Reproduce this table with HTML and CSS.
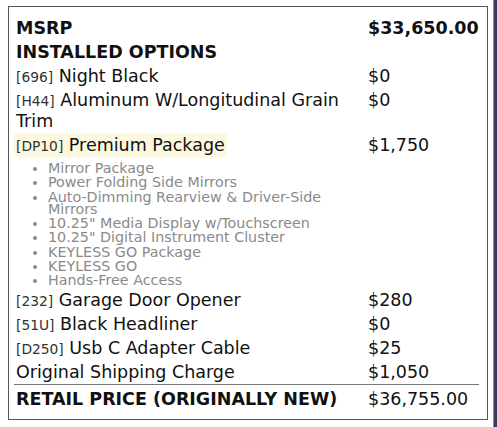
FILE: index.html
```html
<!DOCTYPE html>
<html>
<head>
<meta charset="utf-8">
<link rel="stylesheet" href="styles.css">
</head>
<body>
<div class="edge"></div>
<div class="box">
  <div class="row bold"><div class="label">MSRP</div><div class="value">$33,650.00</div></div>
  <div class="row bold"><div class="label">INSTALLED OPTIONS</div><div class="value"></div></div>
  <div class="row"><div class="label"><span class="code">[696]</span> Night Black</div><div class="value">$0</div></div>
  <div class="row"><div class="label"><span class="code">[H44]</span> Aluminum W/Longitudinal Grain Trim</div><div class="value">$0</div></div>
  <div class="row"><div class="label"><span class="hl"><span class="code">[DP10]</span> Premium Package</span></div><div class="value">$1,750</div></div>
  <div class="row pkg-row"><div class="label">
    <ul class="pkg">
      <li>Mirror Package</li>
      <li>Power Folding Side Mirrors</li>
      <li>Auto-Dimming Rearview &amp; Driver-Side Mirrors</li>
      <li>10.25" Media Display w/Touchscreen</li>
      <li>10.25" Digital Instrument Cluster</li>
      <li>KEYLESS GO Package</li>
      <li>KEYLESS GO</li>
      <li>Hands-Free Access</li>
    </ul>
  </div><div class="value"></div></div>
  <div class="row"><div class="label"><span class="code">[232]</span> Garage Door Opener</div><div class="value">$280</div></div>
  <div class="row"><div class="label"><span class="code">[51U]</span> Black Headliner</div><div class="value">$0</div></div>
  <div class="row"><div class="label"><span class="code">[D250]</span> Usb C Adapter Cable</div><div class="value">$25</div></div>
  <div class="row"><div class="label">Original Shipping Charge</div><div class="value">$1,050</div></div>
  <div class="row total"><div class="label">RETAIL PRICE (ORIGINALLY NEW)</div><div class="value">$36,755.00</div></div>
</div>
</body>
</html>
```

FILE: styles.css
```css
html, body {
  margin: 0;
  padding: 0;
  background: #ffffff;
}
body {
  font-family: "DejaVu Sans", sans-serif;
  color: #111;
  width: 497px;
  height: 427px;
  overflow: hidden;
}
.edge {
  position: fixed;
  top: 0;
  right: 0;
  width: 3px;
  height: 100%;
  background: #3a3a64;
  border-left: 1px solid #8a8aa6;
}
.box {
  box-sizing: border-box;
  margin: 6px 0 0 8px;
  width: 480px;
  height: 414px;
  border: 1px solid #555;
  padding: 9.5px 8px 0 5px;
}
.row {
  display: grid;
  grid-template-columns: 352px 1fr;
  font-size: 17.5px;
  line-height: 21px;
  padding: 1.5px 0 1.5px;
}
.label, .value {
  padding-left: 2px;
}
.bold {
  font-weight: bold;
}
.code {
  font-size: 13.8px;
  line-height: 1;
  color: #333;
}
.hl {
  background: #fcf9e0;
  padding: 2px 2px;
  margin: 0 -2px;
}
.pkg-row {
  padding: 2.4px 0 2px;
}
.pkg {
  margin: 0;
  padding: 0 0 0 32px;
  list-style: disc;
  font-size: 14.3px;
  line-height: 12px;
  color: #8a8a8a;
}
.pkg li {
  margin-top: 2.3px;
}
.total {
  border-top: 1px solid #777;
  padding-top: 4px;
}
.total .label {
  font-weight: bold;
}
```
